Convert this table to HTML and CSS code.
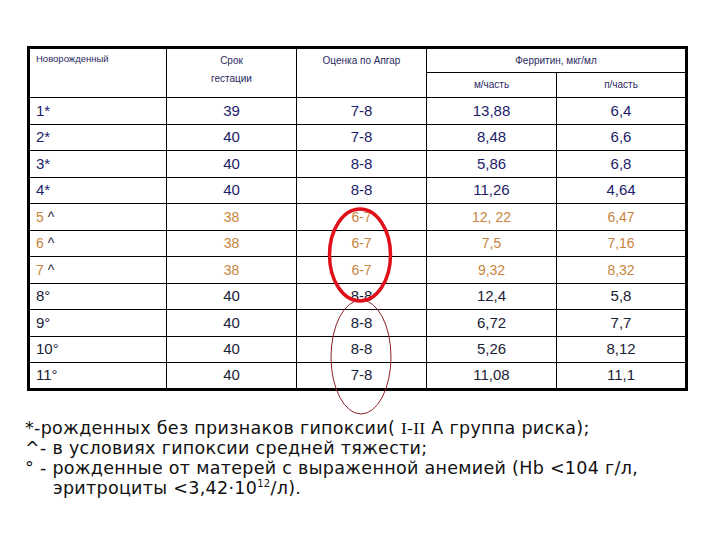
FILE: index.html
```html
<!DOCTYPE html>
<html lang="ru">
<head>
<meta charset="utf-8">
<title>Ферритин</title>
<link rel="stylesheet" href="styles.css">
</head>
<body>
<div class="page">
  <table class="data">
    <colgroup>
      <col class="c-first"><col class="c"><col class="c"><col class="c"><col class="c">
    </colgroup>
    <thead>
      <tr class="h1">
        <th rowspan="2" class="left top-first">Новорожденный</th>
        <th rowspan="2" class="top">Срок<br>гестации</th>
        <th rowspan="2" class="top">Оценка по Апгар</th>
        <th colspan="2" class="mid">Ферритин, мкг/мл</th>
      </tr>
      <tr class="h2">
        <th class="mid">м/часть</th>
        <th class="mid">п/часть</th>
      </tr>
    </thead>
    <tbody>
      <tr class="r navy"><td class="left">1*</td><td>39</td><td>7-8</td><td>13,88</td><td>6,4</td></tr>
      <tr class="r navy"><td class="left">2*</td><td>40</td><td>7-8</td><td>8,48</td><td>6,6</td></tr>
      <tr class="r navy"><td class="left">3*</td><td>40</td><td>8-8</td><td>5,86</td><td>6,8</td></tr>
      <tr class="r navy"><td class="left">4*</td><td>40</td><td>8-8</td><td>11,26</td><td>4,64</td></tr>
      <tr class="r orange"><td class="left">5 <span class="mark">^</span></td><td>38</td><td>6-7</td><td>12, 22</td><td>6,47</td></tr>
      <tr class="r orange"><td class="left">6 <span class="mark">^</span></td><td>38</td><td>6-7</td><td>7,5</td><td>7,16</td></tr>
      <tr class="r orange"><td class="left">7 <span class="mark">^</span></td><td>38</td><td>6-7</td><td>9,32</td><td>8,32</td></tr>
      <tr class="r slate"><td class="left">8°</td><td>40</td><td>8-8</td><td>12,4</td><td>5,8</td></tr>
      <tr class="r slate"><td class="left">9°</td><td>40</td><td>8-8</td><td>6,72</td><td>7,7</td></tr>
      <tr class="r slate"><td class="left">10°</td><td>40</td><td>8-8</td><td>5,26</td><td>8,12</td></tr>
      <tr class="r slate"><td class="left">11°</td><td>40</td><td>7-8</td><td>11,08</td><td>11,1</td></tr>
    </tbody>
  </table>

  <div class="notes">
    <p class="note"><span class="sym">*-</span>рожденных без признаков гипоксии( <span class="roman">I-II</span> А группа риска);</p>
    <p class="note"><span class="sym">^- </span>в условиях гипоксии средней тяжести;</p>
    <p class="note hang"><span class="sym">° - </span>рожденные от матерей с выраженной анемией (Hb &lt;104 г/л,<br>эритроциты &lt;3,42·10<sup>12</sup>/л).</p>
  </div>

  <svg class="marks" width="720" height="540" viewBox="0 0 720 540" aria-hidden="true">
    <ellipse cx="361" cy="357" rx="30" ry="57" fill="none" stroke="#8e1f24" stroke-width="1"/>
    <ellipse cx="360" cy="255" rx="30.5" ry="46" fill="none" stroke="#e0101a" stroke-width="3.5"/>
  </svg>
</div>
</body>
</html>
```

FILE: styles.css
```css
html, body {
  margin: 0;
  padding: 0;
  background: #ffffff;
}

.page {
  position: relative;
  width: 720px;
  height: 540px;
  padding-top: 46px;
  box-sizing: border-box;
}

.data {
  margin-left: 27px;
  border-collapse: collapse;
  border: 3px solid #000;
  font-family: "Liberation Sans", Arial, sans-serif;
  table-layout: fixed;
  width: 659px;
}

.c-first { width: 138px; }
.c { width: 130px; }

.data th,
.data td {
  border: 1px solid #000;
  padding: 0;
  text-align: center;
}

.data th {
  font-weight: normal;
  font-size: 10px;
  color: #2a2a62;
  line-height: 18px;
}

.h1 { height: 25px; }
.h2 { height: 25px; }

.data th.top {
  vertical-align: top;
  padding-top: 3px;
}

.data th.top-first {
  vertical-align: top;
  padding-top: 1px;
  font-size: 9.5px;
}

.data th.mid {
  vertical-align: middle;
}

.data .left {
  text-align: left;
  padding-left: 6px;
}

.r {
  height: 26.5px;
}

.data td {
  font-size: 15px;
  line-height: 18px;
  vertical-align: middle;
}

.navy td { color: #1c1c68; }
.slate td { color: #1a2236; }
.orange td {
  color: #c8843e;
  font-size: 14px;
}
.orange .mark { color: #2a2a44; }

.notes {
  margin-top: 27px;
  padding-left: 25px;
  font-family: "DejaVu Sans", sans-serif;
  font-size: 17.5px;
  letter-spacing: 0.3px;
  line-height: 20px;
  color: #111111;
}

.note {
  margin: 0;
}

.hang {
  padding-left: 28px;
  text-indent: -28px;
}

.roman {
  font-family: "Liberation Serif", "Times New Roman", serif;
}

sup {
  font-size: 10px;
  line-height: 0;
  vertical-align: 7px;
}

.marks {
  position: absolute;
  left: 0;
  top: 0;
  pointer-events: none;
}
```
